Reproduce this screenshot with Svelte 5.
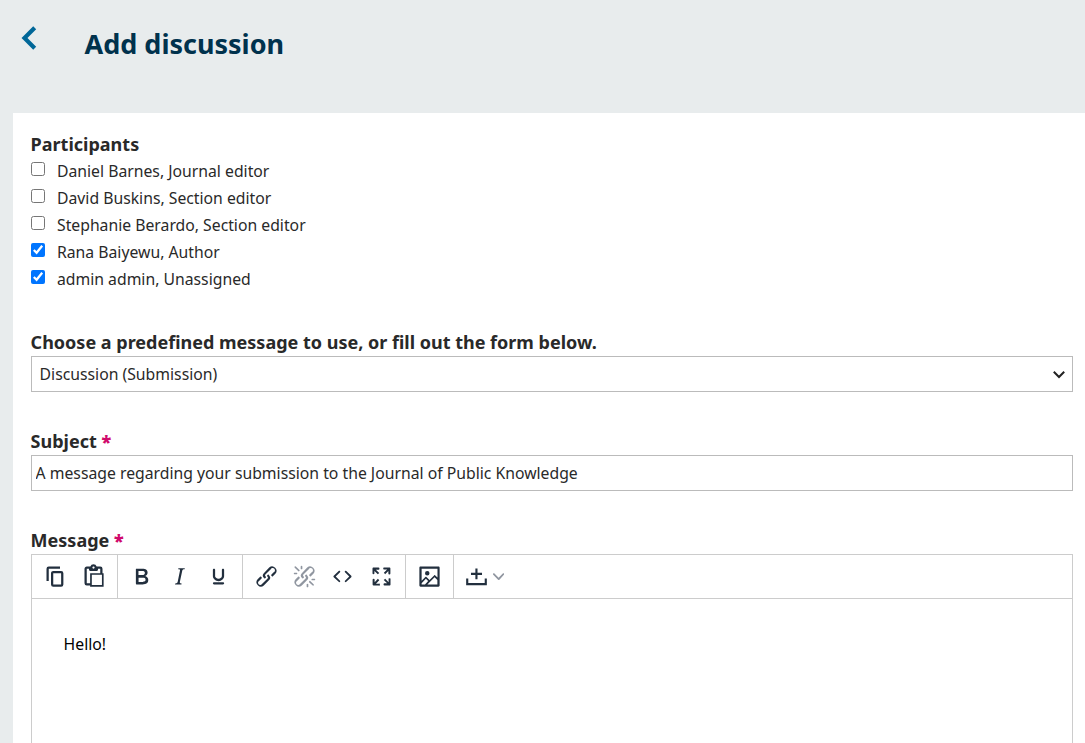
<script>
  let participants = $state([
    { label: 'Daniel Barnes, Journal editor', checked: false },
    { label: 'David Buskins, Section editor', checked: false },
    { label: 'Stephanie Berardo, Section editor', checked: false },
    { label: 'Rana Baiyewu, Author', checked: true },
    { label: 'admin admin, Unassigned', checked: true }
  ]);
  let subject = $state('A message regarding your submission to the Journal of Public Knowledge');

  const chain =
    'M6.2 12.3a1 1 0 0 1 1.4 1.4l-2 2a2 2 0 1 0 2.6 2.8l4.8-4.8a1 1 0 0 0 0-1.4 1 1 0 1 1 1.4-1.3 2.9 2.9 0 0 1 0 4L9.6 20a3.9 3.9 0 0 1-5.5-5.5l2-2Zm11.6-.6a1 1 0 0 1-1.4-1.4l2-2a2 2 0 1 0-2.6-2.8L11 10.3a1 1 0 0 0 0 1.4A1 1 0 1 1 9.6 13a2.9 2.9 0 0 1 0-4L14.4 4a3.9 3.9 0 0 1 5.5 5.5l-2 2Z';

  const groups = [
    [
      { name: 'Copy', d: 'M16 3H6a2 2 0 0 0-2 2v11h2V5h10V3Zm1 4a2 2 0 0 1 2 2v10a2 2 0 0 1-2 2h-7a2 2 0 0 1-2-2V9c0-1.2.9-2 2-2h7Zm0 12V9h-7v10h7Z' },
      { name: 'Paste', d: 'M18 9V5h-2v1c0 .6-.4 1-1 1H9a1 1 0 0 1-1-1V5H6v13h3V9h9ZM9 20H6a2 2 0 0 1-2-2V5c0-1.1.9-2 2-2h3.2A3 3 0 0 1 12 1a3 3 0 0 1 2.8 2H18a2 2 0 0 1 2 2v4h1v12H9v-1Zm1.5-9.5v9h9v-9h-9ZM12 3a1 1 0 0 0-1 1c0 .5.4 1 1 1s1-.5 1-1-.4-1-1-1Z' }
    ],
    [
      { name: 'Bold', d: 'M7.8 19c-.3 0-.5 0-.6-.2l-.2-.5V5.7c0-.2 0-.4.2-.5l.6-.2h5c1.5 0 2.7.3 3.5 1 .7.6 1.1 1.4 1.1 2.5a3 3 0 0 1-.6 1.9c-.4.6-1 1-1.6 1.2.4.1.9.3 1.3.6s.8.7 1 1.2c.4.4.5 1 .5 1.6 0 1.3-.4 2.3-1.3 3-.8.7-2.1 1-3.8 1H7.8Zm5-8.3c.6 0 1.2-.1 1.6-.5.4-.3.6-.7.6-1.3 0-1.1-.8-1.7-2.3-1.7H9.3v3.5h3.4Zm.5 6c.7 0 1.3-.1 1.7-.4.4-.4.6-.9.6-1.5s-.2-1-.7-1.4c-.4-.3-1-.4-2-.4H9.4v3.8h4Z' },
      { name: 'Italic', d: 'm16.7 4.7-.1.9h-.3c-.6 0-1 0-1.4.3-.3.3-.4.6-.5 1.1l-2.1 9.8v.6c0 .5.4.8 1.4.8h.2l-.2.8H8l.2-.8h.2c1.1 0 1.8-.5 2-1.5l2-9.8.1-.5c0-.6-.4-.8-1.4-.8h-.3l.2-.9h5.8Z' },
      { name: 'Underline', d: 'M16 5c.6 0 1 .4 1 1v5.5a4 4 0 0 1-.4 1.8l-1 1.4a5.3 5.3 0 0 1-5.5 1 5 5 0 0 1-1.6-1c-.5-.4-.8-.9-1.1-1.4a4 4 0 0 1-.4-1.8V6c0-.6.4-1 1-1s1 .4 1 1v5.5c0 .3 0 .6.2 1l.6.7a3.3 3.3 0 0 0 2.2.8 3.4 3.4 0 0 0 2.2-.8c.3-.2.4-.5.6-.8l.2-.9V6c0-.6.4-1 1-1ZM8 17h8c.6 0 1 .4 1 1s-.4 1-1 1H8a1 1 0 0 1 0-2Z' }
    ],
    [
      { name: 'Insert link', d: chain },
      { name: 'Remove link', disabled: true, d: chain + 'M7.6 6.3a.8.8 0 0 1-1 1.1L3.3 4.2a.7.7 0 1 1 1-1l3.2 3.1ZM5.1 8.6a.8.8 0 0 1 0 1.5H3a.8.8 0 0 1 0-1.5H5Zm5-3.5a.8.8 0 0 1-1.5 0V3a.8.8 0 0 1 1.5 0V5Zm6 11.8a.8.8 0 0 1 1-1l3.2 3.2a.8.8 0 0 1-1 1L16 17Zm-2.2 2a.8.8 0 0 1 1.5 0V21a.8.8 0 0 1-1.5 0V19Zm5-3.5a.7.7 0 1 1 0-1.5H21a.8.8 0 0 1 0 1.5H19Z' },
      { name: 'Source code', d: 'M9.8 15.7c.3.3.3.8 0 1-.3.4-.9.4-1.2 0l-4.4-4.1a.8.8 0 0 1 0-1.2l4.4-4.2c.3-.3.9-.3 1.2 0 .3.3.3.8 0 1.1L6 12l3.8 3.7ZM14.2 15.7c-.3.3-.3.8 0 1 .4.4.9.4 1.2 0l4.4-4.1c.3-.3.3-.9 0-1.2l-4.4-4.2a.8.8 0 0 0-1.2 0c-.3.3-.3.8 0 1.1L18 12l-3.8 3.7Z' },
      { name: 'Fullscreen', d: 'm15.3 10-1.2-1.3 2.9-3h-2.3a.9.9 0 1 1 0-1.7H19c.5 0 .9.4.9.9v4.4a.9.9 0 1 1-1.8 0V7l-2.9 3Zm0 4 3 3v-2.3a.9.9 0 1 1 1.7 0V19c0 .5-.4.9-.9.9h-4.4a.9.9 0 1 1 0-1.8H17l-3-2.9 1.3-1.2ZM10 15.4l-2.9 3h2.3a.9.9 0 1 1 0 1.7H5a.9.9 0 0 1-.9-.9v-4.4a.9.9 0 1 1 1.8 0V17l2.9-3 1.2 1.3ZM8.7 10 5.7 7v2.3a.9.9 0 0 1-1.7 0V5c0-.5.4-.9.9-.9h4.4a.9.9 0 0 1 0 1.8H7l3 2.9-1.3 1.2Z' }
    ],
    [
      { name: 'Insert image', d: 'm5 15.7 3.3-3.2c.3-.3.7-.3 1 0L12 15l4.1-4c.3-.4.8-.4 1 0l2 1.9V5H5v10.7ZM5 18V19h3l2.8-2.9-2-2L5 17.9Zm14-3-2.5-2.4-6.4 6.5H19v-4ZM4 3h16c.6 0 1 .4 1 1v16c0 .6-.4 1-1 1H4a1 1 0 0 1-1-1V4c0-.6.4-1 1-1Zm6 8a2 2 0 1 0 0-4 2 2 0 0 0 0 4Z' }
    ],
    [
      { name: 'Insert content', menu: true, d: 'M12.9 4.9v3.8h4v1.9h-4v3.8H11v-3.8H7.1V8.7H11V4.9ZM4.7 13.7v4.1h14.6v-4.1h1.9v6H2.8v-6Z' }
    ]
  ];
</script>

<div class="page">
  <header>
    <button class="back" aria-label="Back">
      <svg viewBox="0 0 16 24" width="16" height="24"><path d="M13.7 1.8 3.5 12l10.2 10.2" /></svg>
    </button>
    <h1>Add discussion</h1>
  </header>

  <main>
    <fieldset>
      <legend>Participants</legend>
      {#each participants as person}
        <label class="option">
          <input type="checkbox" bind:checked={person.checked} />
          <span>{person.label}</span>
        </label>
      {/each}
    </fieldset>

    <section class="field">
      <label for="template">Choose a predefined message to use, or fill out the form below.</label>
      <div class="select">
        <select id="template"><option>Discussion (Submission)</option></select>
        <svg viewBox="0 0 14 10" width="14" height="10"><path d="M1.8 2.8 7 8l5.2-5.2" /></svg>
      </div>
    </section>

    <section class="field">
      <label for="subject">Subject <b>*</b></label>
      <input id="subject" class="text" bind:value={subject} />
    </section>

    <section class="field message">
      <div class="title">Message <b>*</b></div>
      <div class="editor">
        <div class="toolbar">
          {#each groups as group}
            <div class="group">
              {#each group as tool}
                <button class="tool" class:menu={tool.menu} disabled={tool.disabled} aria-label={tool.name}>
                  <svg viewBox="0 0 24 24" width="27" height="27"><path fill-rule="evenodd" d={tool.d} /></svg>
                  {#if tool.menu}
                    <svg class="chevron" viewBox="0 0 10 10" width="11.25" height="11.25"><path d="M8.7 2.2c.3-.3.8-.3 1 0 .4.4.4.9 0 1.2L5.7 7.8c-.3.3-.9.3-1.2 0L.2 3.4a.8.8 0 0 1 0-1.2c.3-.3.8-.3 1.1 0L5 6l3.7-3.8Z" /></svg>
                  {/if}
                </button>
              {/each}
            </div>
          {/each}
        </div>
        <div class="content"><p>Hello!</p></div>
      </div>
    </section>
  </main>
</div>

<style>
  :global(body) {
    margin: 0;
    overflow: hidden;
  }
  .page {
    box-sizing: border-box;
    height: 743px;
    overflow: hidden;
    display: flex;
    flex-direction: column;
    padding-left: 13px;
    background: #e8eced;
    color: #292929;
    font: 15.75px/27px 'Noto Sans', sans-serif;
  }
  button {
    border: 0;
    padding: 0;
    background: none;
  }
  header {
    flex: none;
    display: flex;
    align-items: flex-start;
    height: 113px;
  }
  .back {
    width: 16px;
    height: 24px;
    margin: 25.5px 0 0 8px;
  }
  .back svg {
    display: block;
  }
  .back path {
    fill: none;
    stroke: #006798;
    stroke-width: 4.2;
  }
  h1 {
    margin: 26px 0 0 47.5px;
    font-size: 27px;
    line-height: 36px;
    color: #00324d;
  }
  main {
    flex: 1;
    min-height: 0;
    display: flex;
    flex-direction: column;
    padding: 18px 12px 0 17.6px;
    background: #fff;
  }
  fieldset {
    margin: 0 0 36px;
    padding: 0;
    border: 0;
  }
  legend,
  .field > label,
  .title {
    display: block;
    padding: 0;
    font-size: 18px;
    line-height: 27px;
    font-weight: 700;
  }
  .option {
    display: flex;
    align-items: flex-start;
    height: 27px;
  }
  .option input {
    width: 14px;
    height: 14px;
    margin: 4px 12.4px 0 0;
  }
  .field {
    margin-bottom: 36px;
  }
  b {
    color: #d00a6c;
  }
  .select {
    display: grid;
    align-items: center;
  }
  .select > * {
    grid-area: 1 / 1;
  }
  .select svg {
    justify-self: end;
    margin-right: 7.5px;
    fill: none;
    stroke: #222;
    stroke-width: 2;
    pointer-events: none;
  }
  select,
  .text {
    box-sizing: border-box;
    display: block;
    width: 100%;
    height: 36px;
    border: 1px solid #bbb;
    border-radius: 0;
    background: #fff;
    color: #292929;
    font: 15.75px/27px 'Noto Sans', sans-serif;
    appearance: none;
    padding: 0 8px;
  }
  .text {
    padding: 0 4px;
  }
  .message {
    flex: 1;
    min-height: 0;
    display: flex;
    flex-direction: column;
    margin: 0;
  }
  .editor {
    flex: 1;
    border: 1px solid #ccc;
    border-bottom: 0;
  }
  .toolbar {
    display: flex;
    height: 43px;
    border-bottom: 1px solid #ccc;
  }
  .group {
    display: flex;
    align-items: center;
    padding: 0 4.5px;
    border-right: 1px solid #ccc;
  }
  .group:last-child {
    border: 0;
  }
  .tool {
    display: flex;
    align-items: center;
    justify-content: center;
    width: 38.25px;
    height: 36px;
    fill: #222f3e;
  }
  .tool:disabled {
    fill: #9096a0;
  }
  .tool.menu {
    width: 54px;
    justify-content: flex-start;
    padding-left: 4.5px;
    gap: 3px;
  }
  .chevron {
    fill: #9096a0;
  }
  .content {
    padding: 32px;
    color: #000;
  }
  .content p {
    margin: 0;
  }
</style>
